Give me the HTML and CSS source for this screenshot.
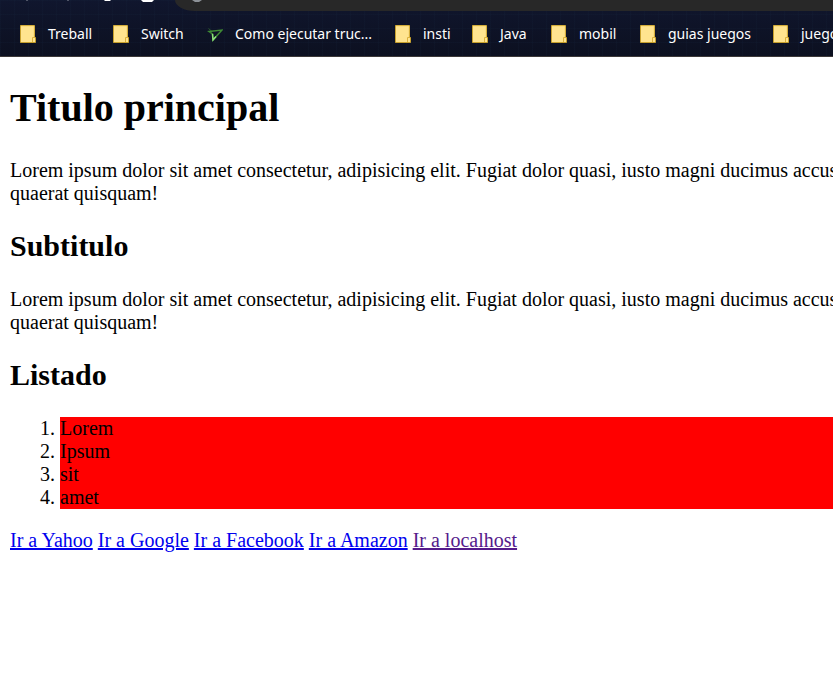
FILE: index.html
```html
<!DOCTYPE html>
<html lang="es">
<head>
<meta charset="utf-8">
<title>Titulo principal</title>
<link rel="stylesheet" href="styles.css">
</head>
<body>
<svg class="defs" aria-hidden="true">
  <symbol id="folder" viewBox="0 0 16 18">
    <path d="M.5.5h14v12h1v5H.5z" fill="#ffe48f" stroke="#c7a02c"/>
    <path d="M1 1h13v11" fill="none" stroke="#f3cf62" stroke-width=".6"/>
    <path d="M12.5 17v-4.500h2.500" fill="none" stroke="#dcb23c"/>
  </symbol>
</svg>
<header class="browser">
  <div class="toolbar">
    <svg class="tools" viewBox="0 0 175 11" aria-hidden="true">
      <path d="M26 0h2M67 0h2" stroke="#8d919d"/>
      <path d="M104 0h7l-1 1h-5z" fill="#fff"/>
      <path d="M141 0h13l-2 2h-9z" fill="#fff"/>
    </svg>
    <div class="address">
      <svg class="info" viewBox="0 0 12 2" aria-hidden="true"><path d="M1 0h10L8 2H4z" fill="#8c9197"/></svg>
    </div>
  </div>
  <nav class="bookmarks">
    <a href="#"><svg><use href="#folder"/></svg>Treball</a>
    <a href="#"><svg><use href="#folder"/></svg>Switch</a>
    <a href="#"><svg viewBox="0 0 16 18"><path d="M1.500 3.500L5 6.500" stroke="#2b5a2c"/><path d="M2 6.500l13-1.500L6 15l-.5-6z" fill="none" stroke="#3f8a35" stroke-width="1.500"/><path d="M5.500 9L6 15l3-3.500" fill="none" stroke="#8ce07a" stroke-width="1.500"/></svg>Como ejecutar truc...</a>
    <a href="#"><svg><use href="#folder"/></svg>insti</a>
    <a href="#"><svg><use href="#folder"/></svg>Java</a>
    <a href="#"><svg><use href="#folder"/></svg>mobil</a>
    <a href="#"><svg><use href="#folder"/></svg>guias juegos</a>
    <a href="#"><svg><use href="#folder"/></svg>juegos</a>
  </nav>
</header>
<main>
  <h1>Titulo principal</h1>
  <p>Lorem ipsum dolor sit amet consectetur, adipisicing elit. Fugiat dolor quasi, iusto magni ducimus accusamus<br>quaerat quisquam!</p>
  <h2>Subtitulo</h2>
  <p>Lorem ipsum dolor sit amet consectetur, adipisicing elit. Fugiat dolor quasi, iusto magni ducimus accusamus<br>quaerat quisquam!</p>
  <h2>Listado</h2>
  <ol>
    <li>Lorem</li>
    <li>Ipsum</li>
    <li>sit</li>
    <li>amet</li>
  </ol>
  <a href="#yahoo">Ir a Yahoo</a>
  <a href="#google">Ir a Google</a>
  <a href="#facebook">Ir a Facebook</a>
  <a href="#amazon">Ir a Amazon</a>
  <a class="visited" href="#localhost">Ir a localhost</a>
</main>
</body>
</html>
```
FILE: styles.css
```css
body {
  margin: 0;
  background: #fff;
  color: #000;
  font: 20px/23px "Liberation Serif", "Times New Roman", serif;
  overflow: hidden;
}

.defs {
  position: absolute;
  width: 0;
  height: 0;
}

.browser {
  background:
    repeating-linear-gradient(90deg, #1c30481f 0 1px, transparent 1px 14px),
    repeating-linear-gradient(#1c30481f 0 1px, transparent 1px 14px),
    linear-gradient(#10162e, #0c1020);
  border-bottom: 1px solid #3c3838;
}

.toolbar {
  display: flex;
  height: 11px;
}

.tools {
  flex: none;
  width: 175px;
  height: 11px;
}

.address {
  flex: 1;
  padding-left: 16px;
  background: #282828;
  border-bottom-left-radius: 20px 11px;
}

.info {
  display: block;
  width: 12px;
  height: 2px;
}

.bookmarks {
  display: grid;
  grid-template-columns: 93px 94px 188px 77px 79px 89px 133px auto;
  height: 45px;
  padding-left: 20px;
  align-items: center;
  white-space: nowrap;
  overflow: hidden;
}

.bookmarks a {
  display: flex;
  align-items: center;
  gap: 12px;
  color: #fff;
  font: 14px/20px "Segoe UI", "Noto Sans", sans-serif;
  text-decoration: none;
}

.bookmarks svg {
  flex: none;
  width: 16px;
  height: 18px;
}

main {
  padding: 0 0 20px 10px;
  white-space: nowrap;
}

h1 {
  margin: 28px 0;
  font-size: 40px;
  line-height: 46px;
}

h2 {
  margin: 24px 0 26px;
  font-size: 30px;
  line-height: 33px;
}

p {
  margin: 20px 0;
}

ol {
  margin: 20px 0;
  padding-left: 50px;
}

li {
  background: #f00;
}

main a {
  color: #00e;
}

main .visited {
  color: #551a8b;
}
```
